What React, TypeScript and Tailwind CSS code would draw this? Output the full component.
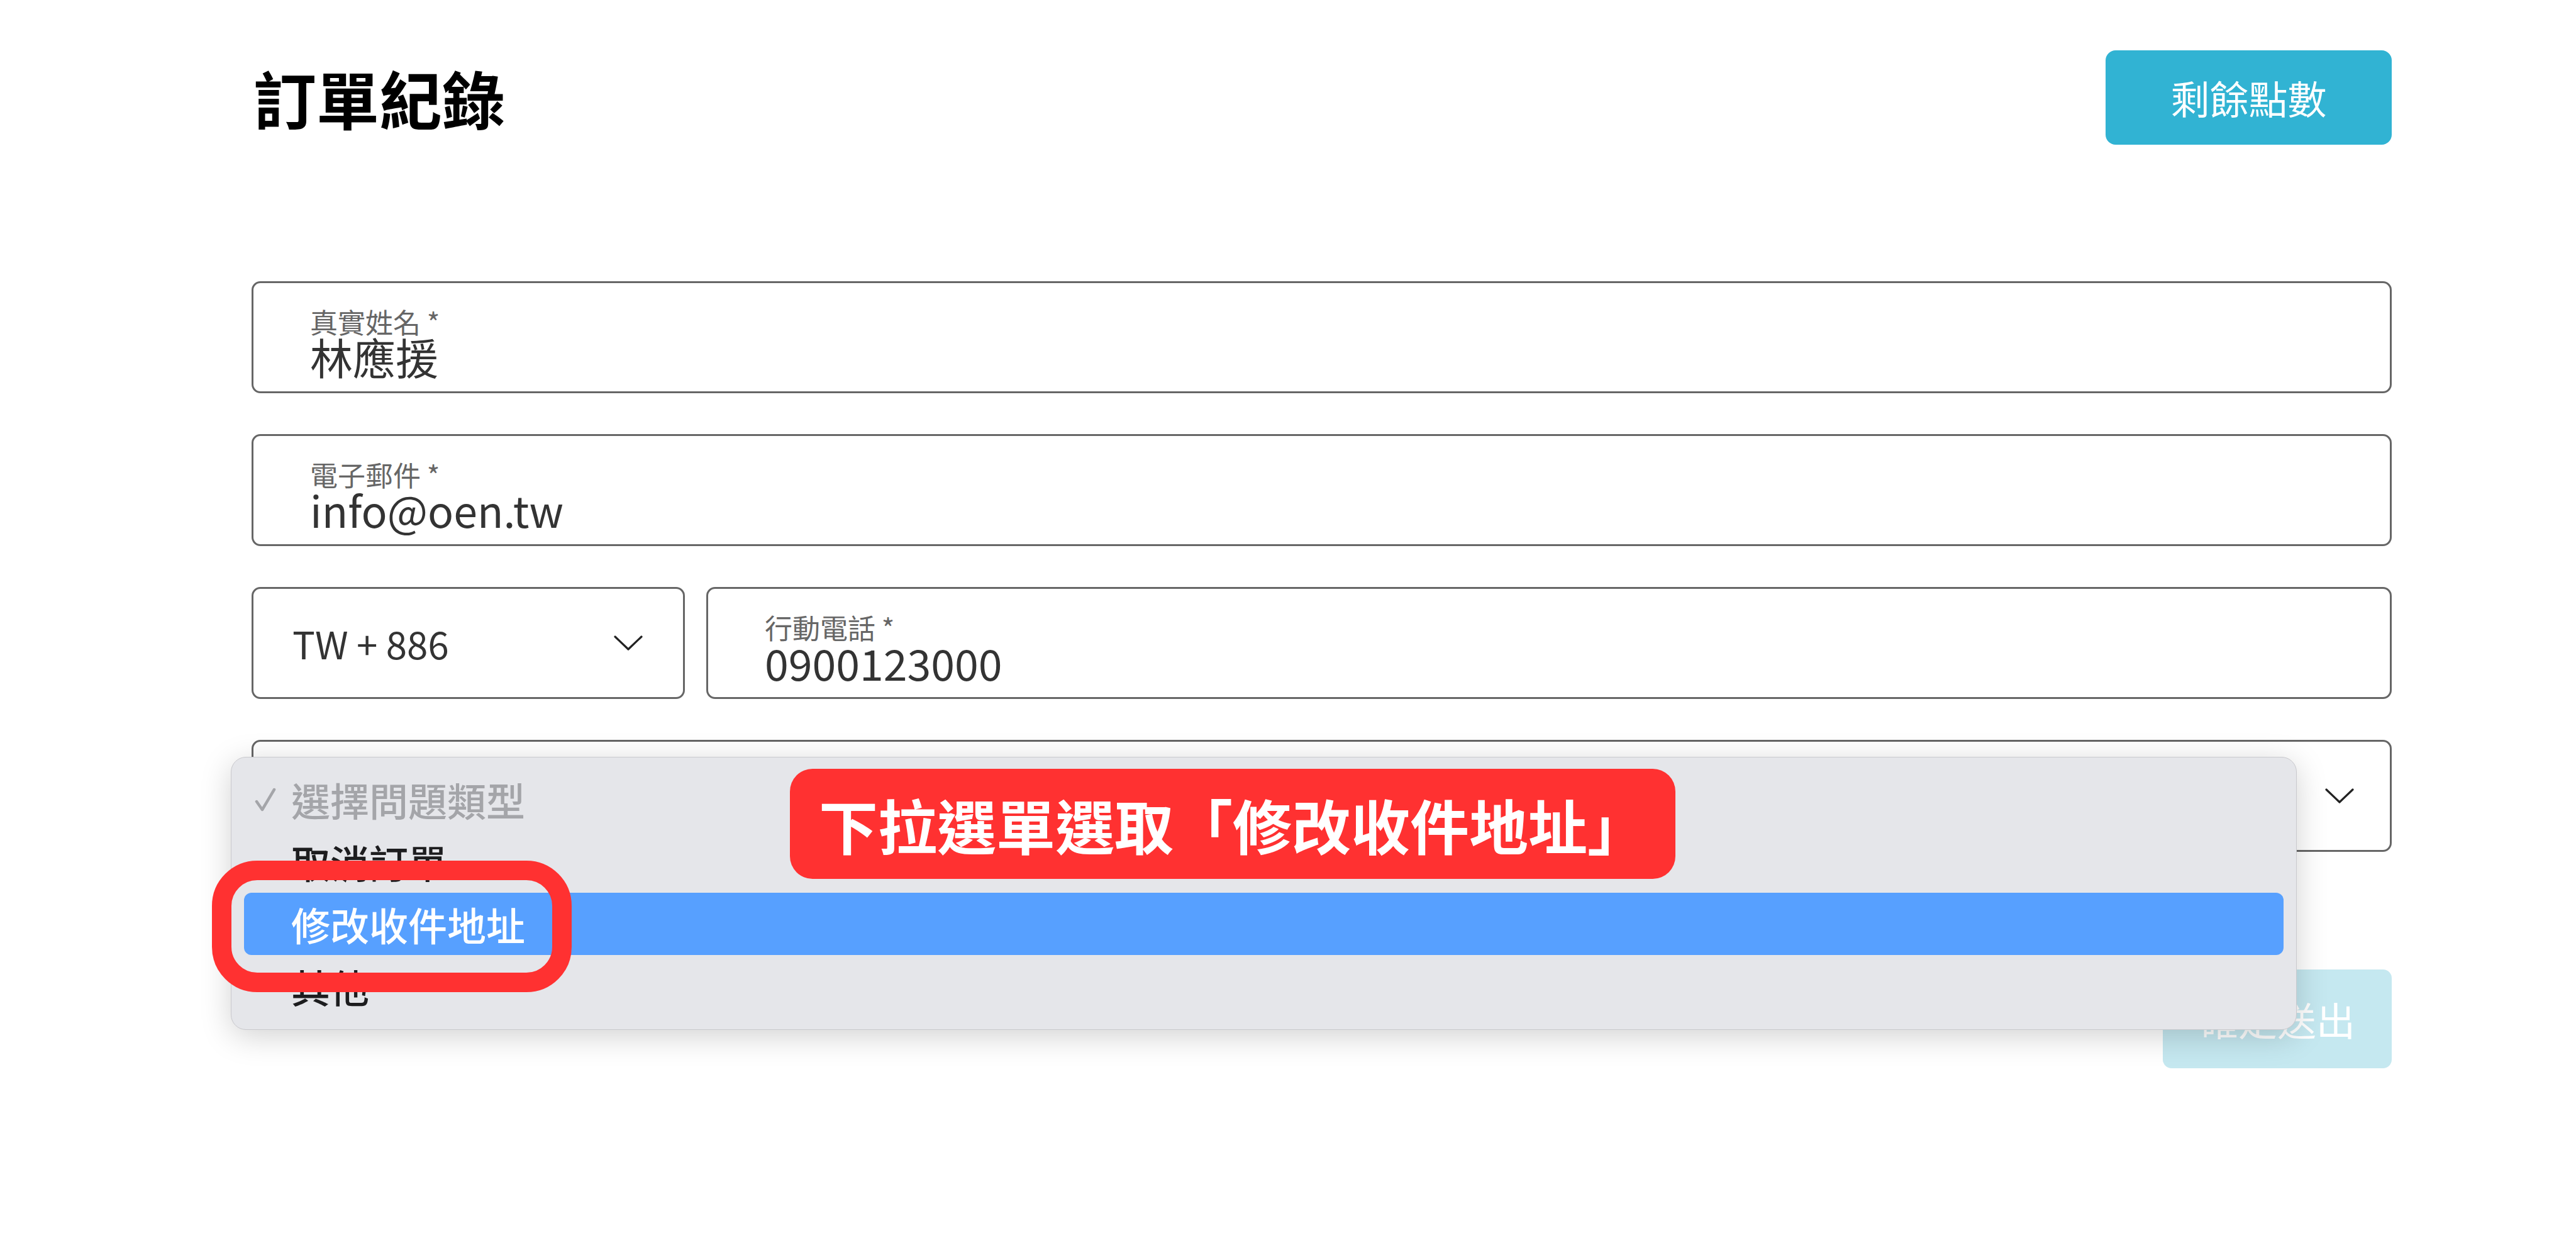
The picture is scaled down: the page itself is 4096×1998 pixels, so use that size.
import { FC, ReactNode } from "react";

const Chevron: FC = () => (
  <svg width="46" height="26" viewBox="0 0 46 26" fill="none">
    <path d="M2 3 L23 23 L44 3" stroke="#222" strokeWidth="3.2" strokeLinecap="round" strokeLinejoin="round" />
  </svg>
);

const TextField: FC<{ label: string; value: string; className?: string }> = ({ label, value, className }) => (
  <div className={`h-[178px] border-[3px] border-[#666] rounded-[14px] pl-[90px] pt-[39px] flex flex-col ${className ?? ""}`}>
    <span className="text-[44px] leading-[44px] text-[#666]">{label}</span>
    <span className="text-[68px] leading-none text-[#333]">{value}</span>
  </div>
);

const Option: FC<{ children: ReactNode; checked?: boolean; active?: boolean; muted?: boolean }> = (props) => (
  <div
    className={`h-[99px] flex items-center pl-[17px] rounded-[12px] text-[62px] leading-none font-medium ${
      props.active ? "bg-[#57a0ff] text-white" : props.muted ? "text-[#a4a5a9]" : "text-[#1d1d1f]"
    }`}
  >
    <span className={`w-[58px] flex items-center ${props.checked ? "" : "invisible"}`}>
      <svg width="34" height="38" viewBox="0 0 34 38" fill="none">
        <path d="M3 22 L12 35 L31 3" stroke="#a4a5a9" strokeWidth="4.5" strokeLinecap="round" strokeLinejoin="round" />
      </svg>
    </span>
    {props.children}
  </div>
);

export default function App() {
  return (
    <div className="relative w-[4096px] h-[1998px] bg-white overflow-hidden font-['Noto_Sans_CJK_TC','Noto_Sans',sans-serif]">
      <div className="w-[3403px] ml-[400px] pt-[80px]">
        <div className="flex items-center justify-between h-[150px]">
          <h1 className="text-[100px] leading-none font-bold text-black ml-[3px]">訂單紀錄</h1>
          <button className="w-[455px] h-[150px] rounded-[16px] bg-[#31b3d3] text-white text-[62px] leading-none">
            剩餘點數
          </button>
        </div>

        <div className="mt-[217px] flex flex-col gap-[65px]">
          <TextField label="真實姓名 *" value="林應援" />
          <TextField label="電子郵件 *" value="info@oen.tw" />
          <div className="flex gap-[34px]">
            <div className="w-[689px] h-[178px] border-[3px] border-[#666] rounded-[14px] pl-[62px] pr-[64px] flex items-center justify-between">
              <span className="text-[60px] leading-none text-[#333]">TW + 886</span>
              <Chevron />
            </div>
            <TextField label="行動電話 *" value="0900123000" className="flex-1" />
          </div>
          <div className="h-[178px] border-[3px] border-[#666] rounded-[14px] pr-[57px] flex items-center justify-end">
            <Chevron />
          </div>
        </div>

        <div className="mt-[187px] flex justify-end">
          <button className="w-[364px] h-[157px] rounded-[14px] bg-[#c5e8f0] text-white text-[62px] leading-none">
            確定送出
          </button>
        </div>
      </div>

      {/* native select menu */}
      <div className="absolute left-[367px] top-[1203px] w-[3285px] h-[434px] rounded-[24px] bg-[#e5e6ea] border border-[#c9c9cd] pt-[17px] px-[20px] shadow-[0_10px_50px_rgba(0,0,0,0.18)]">
        <Option checked muted>選擇問題類型</Option>
        <Option>取消訂單</Option>
        <Option active>修改收件地址</Option>
        <Option>其他</Option>
      </div>

      {/* annotation */}
      <div className="absolute left-[337px] top-[1368px] w-[572px] h-[209px] border-[31px] border-[#ff3131] rounded-[72px]" />
      <div className="absolute left-[1256px] top-[1222px] w-[1408px] h-[175px] rounded-[36px] bg-[#ff3131] flex items-center justify-center">
        <span className="text-white font-bold text-[94px] leading-none">下拉選單選取「修改收件地址」</span>
      </div>
    </div>
  );
}
